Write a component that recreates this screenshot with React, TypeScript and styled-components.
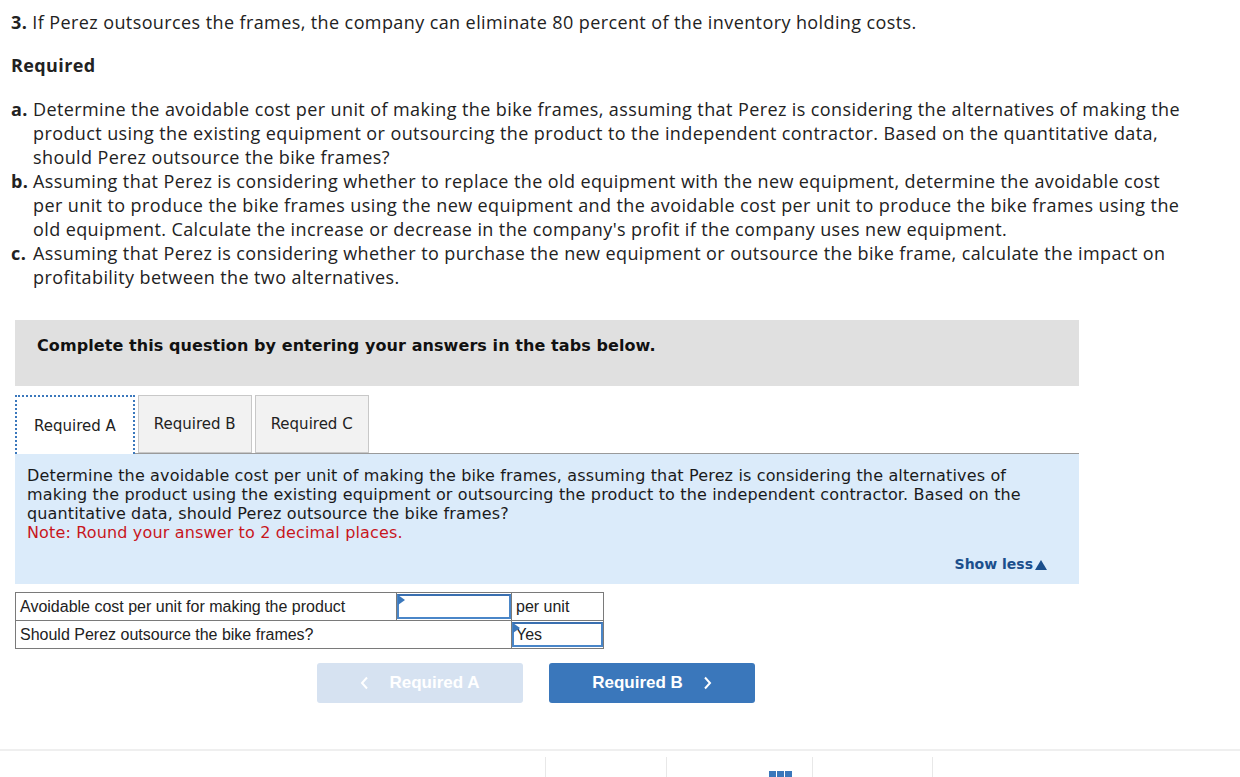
import React from "react"
import styled, { createGlobalStyle } from "styled-components"

const GlobalStyle = createGlobalStyle`
  html, body {
    margin: 0;
    padding: 0;
    background: #fff;
  }
  body {
    font-family: "Open Sans", "Liberation Sans", sans-serif;
    color: #1a1a1a;
    overflow: hidden;
  }
`

const Page = styled.div`
  width: 1240px;
  height: 777px;
  position: relative;
  overflow: hidden;
`

const Intro = styled.div`
  padding: 10px 0 0 11px;
  font-size: 18px;
  line-height: 24px;
  letter-spacing: 0.4px;
  color: #222;
`

const Lead = styled.p`
  margin: 0;
  b {
    font-weight: 700;
  }
`

const RequiredTitle = styled.h3`
  margin: 19px 0 0;
  font-size: 18px;
  line-height: 24px;
  font-weight: 700;
`

const ReqList = styled.ol`
  list-style: none;
  margin: 20px 0 0;
  padding: 0;
  width: 1180px;
`

const ReqItem = styled.li`
  display: grid;
  grid-template-columns: 22px 1fr;
  b {
    font-weight: 700;
  }
`

const Widget = styled.section`
  margin: 31px 0 0 15px;
  width: 1064px;
  font-family: Verdana, "DejaVu Sans", sans-serif;
`

const Banner = styled.div`
  background: #e0e0e0;
  height: 66px;
  box-sizing: border-box;
  padding: 16px 0 0 22px;
  font-size: 16px;
  line-height: 20px;
  letter-spacing: 0.08px;
  font-weight: 700;
  color: #111;
`

const TabList = styled.div`
  margin-top: 9px;
  display: flex;
  align-items: flex-end;
  gap: 3px;
  border-bottom: 1px solid #9a9a9a;
  height: 58px;
`

const Tab = styled.button<{ $active?: boolean }>`
  height: ${(p) => (p.$active ? "59px" : "58px")};
  margin-bottom: ${(p) => (p.$active ? "-1px" : "0")};
  padding: 0 ${(p) => (p.$active ? "17px" : "15px")};
  font-family: Verdana, "DejaVu Sans", sans-serif;
  font-size: 15px;
  color: #222;
  background: ${(p) => (p.$active ? "#fff" : "#f2f2f2")};
  border: ${(p) => (p.$active ? "2px dotted #3b78bc" : "1px solid #c8c8c8")};
  border-bottom: ${(p) => (p.$active ? "none" : "1px solid #c8c8c8")};
  cursor: pointer;
`

const Panel = styled.div`
  background: #dbebfa;
  padding: 12px 12px 0;
  height: 118px;
  display: flex;
  flex-direction: column;
  font-size: 16px;
  line-height: 19px;
  letter-spacing: 0.15px;
  color: #1a1a1a;
`

const PanelText = styled.p`
  margin: 0;
  width: 1012px;
`

const Note = styled.span`
  display: block;
  color: #c8161d;
`

const ShowLess = styled.a`
  align-self: flex-end;
  margin: 13px 20px 0 0;
  font-size: 14px;
  font-weight: 700;
  letter-spacing: 0;
  color: #1b4f8c;
  cursor: pointer;
  display: flex;
  align-items: center;
  gap: 2px;
`

const AnswerTable = styled.table`
  margin-top: 8px;
  width: 588px;
  table-layout: fixed;
  border-collapse: collapse;
  font-family: Arial, "Liberation Sans", sans-serif;
  font-size: 16px;
  color: #222;
  td {
    border: 1px solid #7a7a7a;
    height: 27px;
    padding: 0 4px;
    white-space: nowrap;
  }
`

const InputCell = styled.td`
  &&& {
    padding: 0;
  }
`

const AnswerBox = styled.div`
  position: relative;
  height: 25px;
  border: 2px solid #4a86c8;
  border-top-color: #3a6fb0;
  box-sizing: border-box;
  background: #fff;
  display: flex;
  align-items: center;
  padding-left: 2px;
  &::before {
    content: "";
    position: absolute;
    left: -1px;
    top: -1px;
    border-style: solid;
    border-width: 5px 0 5px 7px;
    border-color: transparent transparent transparent #3b78bc;
  }
`

const Nav = styled.div`
  margin: 14px 0 0 302px;
  display: flex;
  gap: 26px;
`

const NavButton = styled.button<{ $disabled?: boolean }>`
  width: 206px;
  height: 40px;
  border: none;
  border-radius: 3px;
  background: ${(p) => (p.$disabled ? "#d6e2f1" : "#3a77bb")};
  color: #fff;
  font-family: Arial, "Liberation Sans", sans-serif;
  font-size: 17px;
  font-weight: 700;
  display: flex;
  align-items: center;
  justify-content: center;
  gap: 20px;
  cursor: ${(p) => (p.$disabled ? "default" : "pointer")};
  svg {
    flex: none;
  }
`

const Footer = styled.footer`
  position: absolute;
  left: 0;
  right: 0;
  top: 749px;
  height: 28px;
  border-top: 2px solid #efefef;
  display: grid;
  grid-template-columns: 545px 121px 146px 120px 1fr;
`

const FooterCell = styled.div<{ $sep?: boolean }>`
  margin-top: 6px;
  border-left: ${(p) => (p.$sep ? "1px solid #e8e8e8" : "none")};
  display: flex;
  justify-content: flex-end;
  padding-right: 20px;
`

const GridIcon = styled.svg`
  margin-top: 14px;
`

const Chevron = ({ dir }: { dir: "left" | "right" }) => (
  <svg width="9" height="14" viewBox="0 0 9 14">
    <path
      d={dir === "left" ? "M7 1.5 L2 7 L7 12.5" : "M2 1.5 L7 7 L2 12.5"}
      fill="none"
      stroke="#fff"
      strokeWidth="2"
    />
  </svg>
)

const App = () => {
  return (
    <Page>
      <GlobalStyle />
      <Intro>
        <Lead>
          <b>3.</b> If Perez outsources the frames, the company can eliminate 80 percent of the inventory holding costs.
        </Lead>
        <RequiredTitle>Required</RequiredTitle>
        <ReqList>
          <ReqItem>
            <b>a.</b>
            <span>
              Determine the avoidable cost per unit of making the bike frames, assuming that Perez is considering the alternatives of making the product using the existing equipment or outsourcing the product to the independent contractor. Based on the quantitative data, should Perez outsource the bike frames?
            </span>
          </ReqItem>
          <ReqItem>
            <b>b.</b>
            <span>
              Assuming that Perez is considering whether to replace the old equipment with the new equipment, determine the avoidable cost per unit to produce the bike frames using the new equipment and the avoidable cost per unit to produce the bike frames using the old equipment. Calculate the increase or decrease in the company's profit if the company uses new equipment.
            </span>
          </ReqItem>
          <ReqItem>
            <b>c.</b>
            <span>
              Assuming that Perez is considering whether to purchase the new equipment or outsource the bike frame, calculate the impact on profitability between the two alternatives.
            </span>
          </ReqItem>
        </ReqList>
      </Intro>

      <Widget>
        <Banner>Complete this question by entering your answers in the tabs below.</Banner>
        <TabList>
          <Tab $active>Required A</Tab>
          <Tab>Required B</Tab>
          <Tab>Required C</Tab>
        </TabList>
        <Panel>
          <PanelText>
            Determine the avoidable cost per unit of making the bike frames, assuming that Perez is considering the alternatives of making the product using the existing equipment or outsourcing the product to the independent contractor. Based on the quantitative data, should Perez outsource the bike frames?
            <Note>Note: Round your answer to 2 decimal places.</Note>
          </PanelText>
          <ShowLess>
            Show less
            <svg width="12" height="10" viewBox="0 0 12 10">
              <path d="M6 0 L12 10 L0 10 Z" fill="#1b4f8c" />
            </svg>
          </ShowLess>
        </Panel>
        <AnswerTable>
          <colgroup>
            <col style={{ width: 381 }} />
            <col style={{ width: 115 }} />
            <col style={{ width: 92 }} />
          </colgroup>
          <tbody>
            <tr>
              <td>Avoidable cost per unit for making the product</td>
              <InputCell>
                <AnswerBox />
              </InputCell>
              <td>per unit</td>
            </tr>
            <tr>
              <td colSpan={2}>Should Perez outsource the bike frames?</td>
              <InputCell>
                <AnswerBox>Yes</AnswerBox>
              </InputCell>
            </tr>
          </tbody>
        </AnswerTable>
        <Nav>
          <NavButton $disabled>
            <Chevron dir="left" />
            Required A
          </NavButton>
          <NavButton>
            Required B
            <Chevron dir="right" />
          </NavButton>
        </Nav>
      </Widget>

      <Footer>
        <FooterCell />
        <FooterCell $sep />
        <FooterCell $sep>
          <GridIcon width="23" height="23" viewBox="0 0 23 23">
            {[0, 8, 16].map((y) =>
              [0, 8, 16].map((x) => (
                <rect key={`${x}-${y}`} x={x} y={y} width="7" height="7" fill="#3a77bb" />
              ))
            )}
          </GridIcon>
        </FooterCell>
        <FooterCell $sep />
        <FooterCell $sep />
      </Footer>
    </Page>
  )
}

export default App
